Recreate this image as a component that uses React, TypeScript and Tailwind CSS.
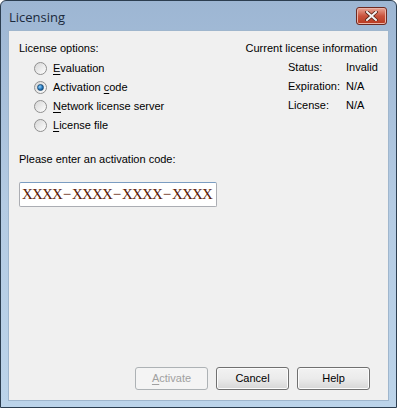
import React, { useState } from 'react';

const FONT = { fontFamily: '"Liberation Sans", Arial, sans-serif' };

function Radio({ checked }: { checked: boolean }) {
  return (
    <span className="relative inline-flex h-[13px] w-[13px] shrink-0 items-center justify-center rounded-full border border-[#8f8f8f] bg-gradient-to-br from-[#d6d6d6] to-[#ffffff]">
      {checked && (
        <span className="h-[7px] w-[7px] rounded-full border border-[#1d4f7a] bg-[radial-gradient(circle_at_35%_35%,#8fd3ff,#1e6fb5_60%,#0e3c66)]" />
      )}
    </span>
  );
}

function Option({
  label,
  ul,
  checked,
  onClick,
}: {
  label: string;
  ul: number;
  checked: boolean;
  onClick: () => void;
}) {
  return (
    <button type="button" onClick={onClick} className="flex h-[19px] items-center gap-[6px] text-left">
      <Radio checked={checked} />
      <span>
        {label.slice(0, ul)}
        <span className="underline underline-offset-2">{label[ul]}</span>
        {label.slice(ul + 1)}
      </span>
    </button>
  );
}

function DlgButton({ children, disabled }: { children: React.ReactNode; disabled?: boolean }) {
  return (
    <button
      type="button"
      disabled={disabled}
      className={`h-[23px] w-[73px] rounded-[3px] border text-[11px] ${
        disabled
          ? 'border-[#adb2b5] bg-[#f4f4f4] text-[#a0a0a0]'
          : 'border-[#707070] bg-gradient-to-b from-[#f2f2f2] via-[#ebebeb] to-[#d6d6d6] text-black shadow-[inset_0_0_0_1px_#fcfcfc]'
      }`}
    >
      {children}
    </button>
  );
}

// activation code mask, drawn one cell per character like a fixed-pitch font
const CODE = 'XXXX−XXXX−XXXX−XXXX';

export default function App() {
  const [option, setOption] = useState(1);
  const options = [
    { label: 'Evaluation', ul: 0 },
    { label: 'Activation code', ul: 11 },
    { label: 'Network license server', ul: 0 },
    { label: 'License file', ul: 0 },
  ];

  return (
    <div
      className="flex h-[408px] w-[397px] flex-col rounded-t-[6px] border border-[#2c3e50] bg-gradient-to-b from-[#9db6d3] via-[#b4cbe3] to-[#bcd4ea] px-[7px] pb-[6px] text-[11px] text-black"
      style={FONT}
    >
      <div className="flex h-[29px] shrink-0 items-center justify-between pl-[1px] pr-[2px]">
        <span
          className="pt-[5px] text-[13px] text-[#1b2a3c]"
          style={{ fontFamily: '"Open Sans", "Liberation Sans", sans-serif' }}
        >
          Licensing
        </span>
        <button
          type="button"
          className="mt-[1px] flex h-[18px] w-[31px] items-center justify-center rounded-[3px] border border-[#6e2a22] bg-gradient-to-b from-[#e8a596] via-[#c9523c] to-[#b8391f] shadow-[inset_0_0_0_1px_#eab4a8]"
        >
          <svg width="13" height="10" viewBox="0 0 13 10">
            <path d="M2 1 L11 9 M11 1 L2 9" stroke="#5a2418" strokeWidth="3.6" strokeLinecap="square" />
            <path d="M2 1 L11 9 M11 1 L2 9" stroke="#f4f4f4" strokeWidth="2" strokeLinecap="square" />
          </svg>
        </button>
      </div>

      <div className="flex flex-1 flex-col border border-[#9fb6cd] bg-[#f0f0f0] px-[10px] pb-[10px] pt-[10px]">
        <div className="flex justify-between">
          <div className="flex flex-col">
            <div className="mb-[3px] h-[15px] leading-[15px]">License options:</div>
            <div className="flex flex-col pl-[15px]">
              {options.map((o, i) => (
                <Option key={o.label} label={o.label} ul={o.ul} checked={option === i} onClick={() => setOption(i)} />
              ))}
            </div>
          </div>
          <div className="flex flex-col items-end pr-[1px]">
            <div className="h-[15px] leading-[15px]">Current license information</div>
            <div className="mt-[4px] grid grid-cols-[58px_31px] gap-y-[4px] leading-[15px]">
              <span>Status:</span>
              <span>Invalid</span>
              <span>Expiration:</span>
              <span>N/A</span>
              <span>License:</span>
              <span>N/A</span>
            </div>
          </div>
        </div>

        <div className="mt-[17px] leading-[15px]">Please enter an activation code:</div>
        <div
          role="textbox"
          className="mt-[15px] flex h-[25px] w-[198px] items-center rounded-[2px] border border-[#abadb3] border-t-[#7a9cc1] bg-white pl-[2px] text-[15px] text-[#5c1a04]"
          style={{ fontFamily: '"Liberation Serif", "Times New Roman", serif' }}
        >
          {CODE.split('').map((c, i) => (
            <span key={i} className="inline-block w-[10px] text-center leading-none">
              {c}
            </span>
          ))}
        </div>

        <div className="flex-1" />
        <div className="flex justify-end gap-[8px] pr-[8px]">
          <DlgButton disabled>
            <span className="underline underline-offset-2">A</span>ctivate
          </DlgButton>
          <DlgButton>Cancel</DlgButton>
          <DlgButton>Help</DlgButton>
        </div>
      </div>
    </div>
  );
}
